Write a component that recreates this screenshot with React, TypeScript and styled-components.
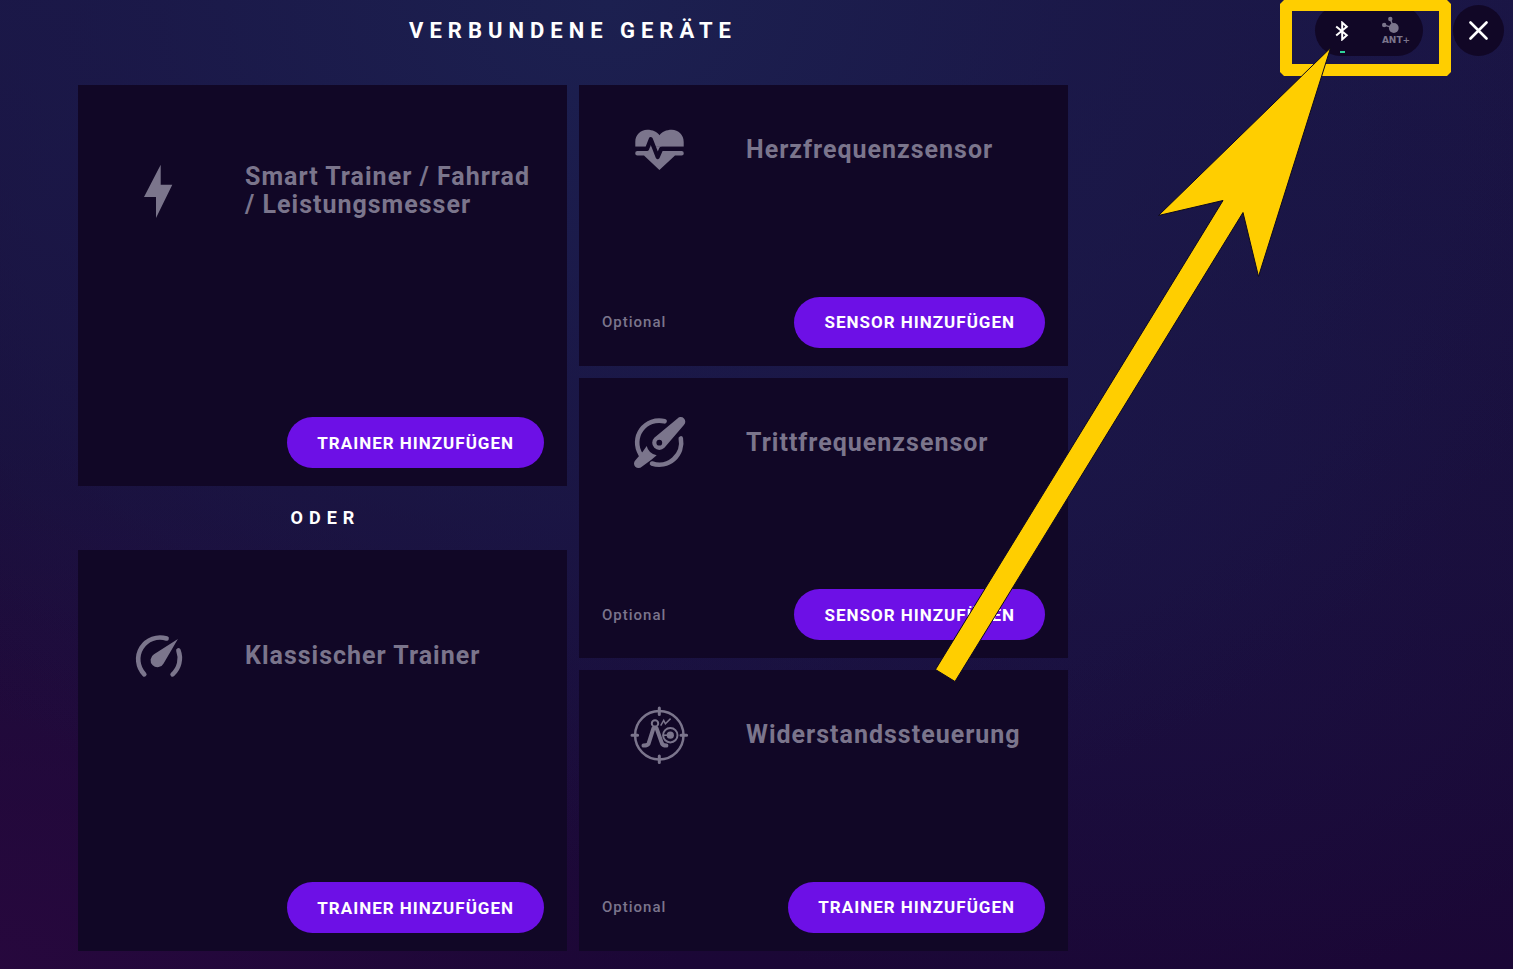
import React from "react";
import styled, { createGlobalStyle } from "styled-components";

const CARD = "#110726";
const MUTED = "#7b758c";
const ACCENT = "#6d10e6";
const MARKER = "#ffce00";

const GlobalStyle = createGlobalStyle`
  *, *::before, *::after { box-sizing: border-box; }
  body {
    margin: 0;
    background: #190a38;
    font-family: Roboto, "Liberation Sans", sans-serif;
    color: #fff;
  }
`;

const Page = styled.div`
  position: relative;
  min-height: 100vh;
  display: flex;
  flex-direction: column;
  padding-bottom: 18px;
  background:
    radial-gradient(ellipse 70% 90% at 40% 0%, rgba(28, 32, 80, 1) 0%, rgba(27, 26, 74, 0.75) 45%, rgba(27, 20, 66, 0) 100%),
    radial-gradient(ellipse 45% 55% at 0% 100%, rgba(40, 8, 62, 0.9) 0%, rgba(34, 8, 60, 0) 100%),
    radial-gradient(ellipse 45% 60% at 72% 45%, rgba(27, 20, 72, 0.7) 0%, rgba(27, 16, 66, 0) 100%),
    linear-gradient(#1a1444 0%, #190e3a 50%, #1b0736 100%);
`;

const Columns = styled.div`
  display: grid;
  grid-template-columns: 78fr 990fr 445fr;
`;

const Header = styled(Columns).attrs({ as: "header" })`
  height: 85px;
  padding-top: 5px;
  align-items: start;
`;

const Title = styled.h1`
  grid-column: 2;
  margin: 0;
  text-align: center;
  font-size: 22px;
  font-weight: 700;
  line-height: 52px;
  letter-spacing: 6px;
  white-space: nowrap;
`;

const Controls = styled.div`
  display: flex;
  justify-content: flex-end;
  gap: 30px;
  padding-right: 9px;
`;

const Pill = styled.div`
  display: flex;
  height: 51px;
  border-radius: 26px;
  background: ${CARD};
`;

const ProtocolButton = styled.button<{ $active?: boolean }>`
  position: relative;
  width: 54px;
  padding: 0;
  border: 0;
  background: none;
  display: flex;
  flex-direction: column;
  align-items: center;
  justify-content: center;
  color: ${(p) => (p.$active ? "#fff" : MUTED)};
  font: 700 9px/9px "DejaVu Sans", sans-serif;
  cursor: pointer;

  &::after {
    content: "";
    display: ${(p) => (p.$active ? "block" : "none")};
    position: absolute;
    bottom: 3px;
    left: 25px;
    width: 5px;
    height: 2px;
    background: #2fd49a;
  }
`;

const CloseButton = styled.button`
  display: grid;
  place-items: center;
  width: 51px;
  height: 51px;
  padding: 0;
  border: 0;
  border-radius: 50%;
  background: ${CARD};
  color: #fff;
  cursor: pointer;
`;

const Main = styled(Columns).attrs({ as: "main" })`
  flex: 1;
`;

const Board = styled.div`
  grid-column: 2;
  display: grid;
  grid-template-columns: 1fr 1fr;
  gap: 12px;
`;

const TrainerColumn = styled.section`
  display: grid;
  grid-template-rows: 1fr 64px 1fr;
`;

const SensorColumn = styled.section`
  display: grid;
  grid-template-rows: repeat(3, 1fr);
  gap: 12px;
`;

const Divider = styled.p`
  margin: 0;
  text-align: center;
  text-indent: 6px;
  font-size: 18px;
  font-weight: 700;
  line-height: 64px;
  letter-spacing: 6px;
`;

const Card = styled.article<{ $tall?: boolean }>`
  display: flex;
  flex-direction: column;
  justify-content: space-between;
  gap: 16px;
  padding: ${(p) => (p.$tall ? 76 : 35)}px 23px 18px;
  background: ${CARD};
`;

const CardHead = styled.div`
  display: grid;
  grid-template-columns: 113px 1fr;
  gap: 31px;
  align-items: center;

  svg {
    justify-self: center;
  }
`;

const CardTitle = styled.h2`
  margin: 0;
  color: ${MUTED};
  font-size: 25px;
  font-weight: 700;
  line-height: 28px;
  letter-spacing: 1px;
`;

const CardFoot = styled.div`
  display: flex;
  align-items: center;
`;

const Note = styled.span`
  color: ${MUTED};
  font-size: 15px;
  font-weight: 500;
  line-height: 20px;
  letter-spacing: 1px;
`;

const AddButton = styled.button`
  height: 51px;
  margin-left: auto;
  padding: 0 30px;
  border: 0;
  border-radius: 26px;
  background: ${ACCENT};
  color: #fff;
  font: 700 17px/24px Roboto, "Liberation Sans", sans-serif;
  letter-spacing: 1px;
  white-space: nowrap;
  cursor: pointer;
`;

const Callout = styled.svg`
  position: absolute;
  top: 0;
  right: 0;
  pointer-events: none;
`;

const Glyph = ({ children }: { children: React.ReactNode }) => (
  <svg width="60" height="60" viewBox="0 0 60 60" fill="none" aria-hidden="true">
    {children}
  </svg>
);

const BoltIcon = () => (
  <Glyph>
    <path d="M32.7 3.7V23.7H44.3L28 56.9V35.9H16Z" fill={MUTED} />
  </Glyph>
);

const GaugeIcon = () => (
  <Glyph>
    <g stroke={MUTED} strokeWidth="4.6" strokeLinecap="round">
      <path d="M16.3 48.4A21.8 21.8 0 0 1 38.6 12.5" />
      <path d="M50.4 24.4A21.8 21.8 0 0 1 44.6 48.4" />
    </g>
    <path d="M49.9 13L35.6 37.4A6.9 6.9 0 1 1 26 28.3Z" fill={MUTED} />
  </Glyph>
);

const HeartIcon = () => (
  <Glyph>
    <path d="M6.3 26.7V22C6.3 14.8 11.6 9.8 18.2 9.8C23.6 9.8 28.2 12 30.5 15.2C32.8 12 37.4 9.8 42.8 9.8C49.4 9.8 54.7 14.8 54.7 22V26.7Z" fill={MUTED} />
    <path d="M8.4 31H52.6a2.1 2.1 0 0 1 0 4.4H46L30.4 50L15 35.4H8.4a2.1 2.1 0 0 1 0-4.4Z" fill={MUTED} />
    <path d="M18 26.5H33V31.2H18Z" fill={MUTED} />
    <path d="M4 28.9H18L21.8 19.2L28.7 37L32.2 28.9H57" stroke={CARD} strokeWidth="4.2" strokeLinejoin="round" />
  </Glyph>
);

const CrankIcon = () => (
  <Glyph>
    <g stroke={MUTED} strokeWidth="4.6" strokeLinecap="round">
      <path d="M35.6 8.3A22 22 0 0 0 11.6 41.4" />
      <path d="M51.8 25.4A22 22 0 0 1 23 50.5" />
    </g>
    <path
      d="M35.4 34.8L54.9 12A4.4 4.4 0 0 0 48.5 5.4L25.3 24.7A7.1 7.1 0 1 0 35.4 34.8ZM30.3 26.8a2.9 2.9 0 1 1 0 5.8a2.9 2.9 0 0 1 0-5.8Z"
      fill={MUTED}
      fillRule="evenodd"
    />
    <path d="M17.7 33L13.7 38.7L6.4 47.2A4.4 4.4 0 0 0 12.8 53.8L22.7 46.5L27.7 42.3Q19.5 40.5 17.7 33Z" fill={MUTED} />
  </Glyph>
);

const ResistanceIcon = () => (
  <Glyph>
    <g stroke={MUTED}>
      <circle cx="30.3" cy="30.3" r="24.2" strokeWidth="2.5" />
      <path d="M30.3 3V9.6M30.3 51V57.6M3 30.3H8.6M52 30.3H57.6" strokeWidth="3" strokeLinecap="round" />
      <circle cx="26" cy="18.4" r="3.2" strokeWidth="2" />
      <path d="M24.4 23.4L19.6 38.6Q18.8 40.4 14.5 40.6M27.6 23.4L33 38.6Q33.8 40.4 37.4 40.6" strokeWidth="4" strokeLinecap="round" />
      <circle cx="41.3" cy="30.2" r="7.2" strokeWidth="2" />
      <path d="M31.7 20.6L34.7 15.4L36.4 18.8L41.6 13.6" strokeWidth="1.5" />
      <path d="M34 30.2H41" strokeWidth="1.6" />
    </g>
    <circle cx="41.3" cy="30.2" r="3.6" fill={MUTED} />
  </Glyph>
);

const BluetoothIcon = () => (
  <svg width="14" height="20" viewBox="0 0 14 20" fill="none" aria-hidden="true">
    <path d="M1.2 5.4L11.8 14.2L7.2 18.4V1.6L11.8 5.8L1.2 14.6" stroke="currentColor" strokeWidth="2" />
  </svg>
);

const AntIcon = () => (
  <svg width="28" height="20" viewBox="0 0 28 20" aria-hidden="true">
    <path d="M8.3 3L11.8 12L2.200 9.2" stroke="currentColor" strokeWidth="1.4" fill="none" />
    <g fill="currentColor">
      <circle cx="11.8" cy="12" r="4.9" />
      <circle cx="8.3" cy="3" r="2.2" />
      <circle cx="2.2" cy="9" r="2.2" />
    </g>
  </svg>
);

const CloseIcon = () => (
  <svg width="19" height="19" viewBox="0 0 19 19" aria-hidden="true">
    <path d="M1.5 1.5L17.5 17.5M17.5 1.5L1.5 17.5" stroke="currentColor" strokeWidth="2.6" strokeLinecap="round" />
  </svg>
);

interface DeviceCardProps {
  icon: React.ReactNode;
  title: string;
  action: string;
  optional?: boolean;
  tall?: boolean;
}

const DeviceCard = ({ icon, title, action, optional, tall }: DeviceCardProps) => (
  <Card $tall={tall}>
    <CardHead>
      {icon}
      <CardTitle>{title}</CardTitle>
    </CardHead>
    <CardFoot>
      {optional && <Note>Optional</Note>}
      <AddButton type="button">{action}</AddButton>
    </CardFoot>
  </Card>
);

export default function App() {
  return (
    <>
      <GlobalStyle />
      <Page>
        <Header>
          <Title>VERBUNDENE GERÄTE</Title>
          <Controls>
            <Pill>
              <ProtocolButton type="button" $active aria-label="Bluetooth">
                <BluetoothIcon />
              </ProtocolButton>
              <ProtocolButton type="button">
                <AntIcon />
                ANT+
              </ProtocolButton>
            </Pill>
            <CloseButton type="button" aria-label="Schließen">
              <CloseIcon />
            </CloseButton>
          </Controls>
        </Header>
        <Main>
          <Board>
            <TrainerColumn>
              <DeviceCard tall icon={<BoltIcon />} title="Smart Trainer / Fahrrad / Leistungsmesser" action="TRAINER HINZUFÜGEN" />
              <Divider>ODER</Divider>
              <DeviceCard tall icon={<GaugeIcon />} title="Klassischer Trainer" action="TRAINER HINZUFÜGEN" />
            </TrainerColumn>
            <SensorColumn>
              <DeviceCard optional icon={<HeartIcon />} title="Herzfrequenzsensor" action="SENSOR HINZUFÜGEN" />
              <DeviceCard optional icon={<CrankIcon />} title="Trittfrequenzsensor" action="SENSOR HINZUFÜGEN" />
              <DeviceCard optional icon={<ResistanceIcon />} title="Widerstandssteuerung" action="TRAINER HINZUFÜGEN" />
            </SensorColumn>
          </Board>
        </Main>
        <Callout width="583" height="690" viewBox="930 0 583 690" aria-hidden="true">
          <path d="M1284 0H1447L1451 4V72L1447 76H1284L1280 72V4ZM1292 11V64H1439V11Z" fill={MARKER} fillRule="evenodd" />
          <path
            d="M1330.500 48L1158.500 215.500L1223 200.500L935.500 669.500L955 681.500L1243 212.500L1258.500 276.500Z"
            fill={MARKER}
            stroke="#0c0820"
            strokeWidth="1"
            strokeMiterlimit="10"
          />
        </Callout>
      </Page>
    </>
  );
}
